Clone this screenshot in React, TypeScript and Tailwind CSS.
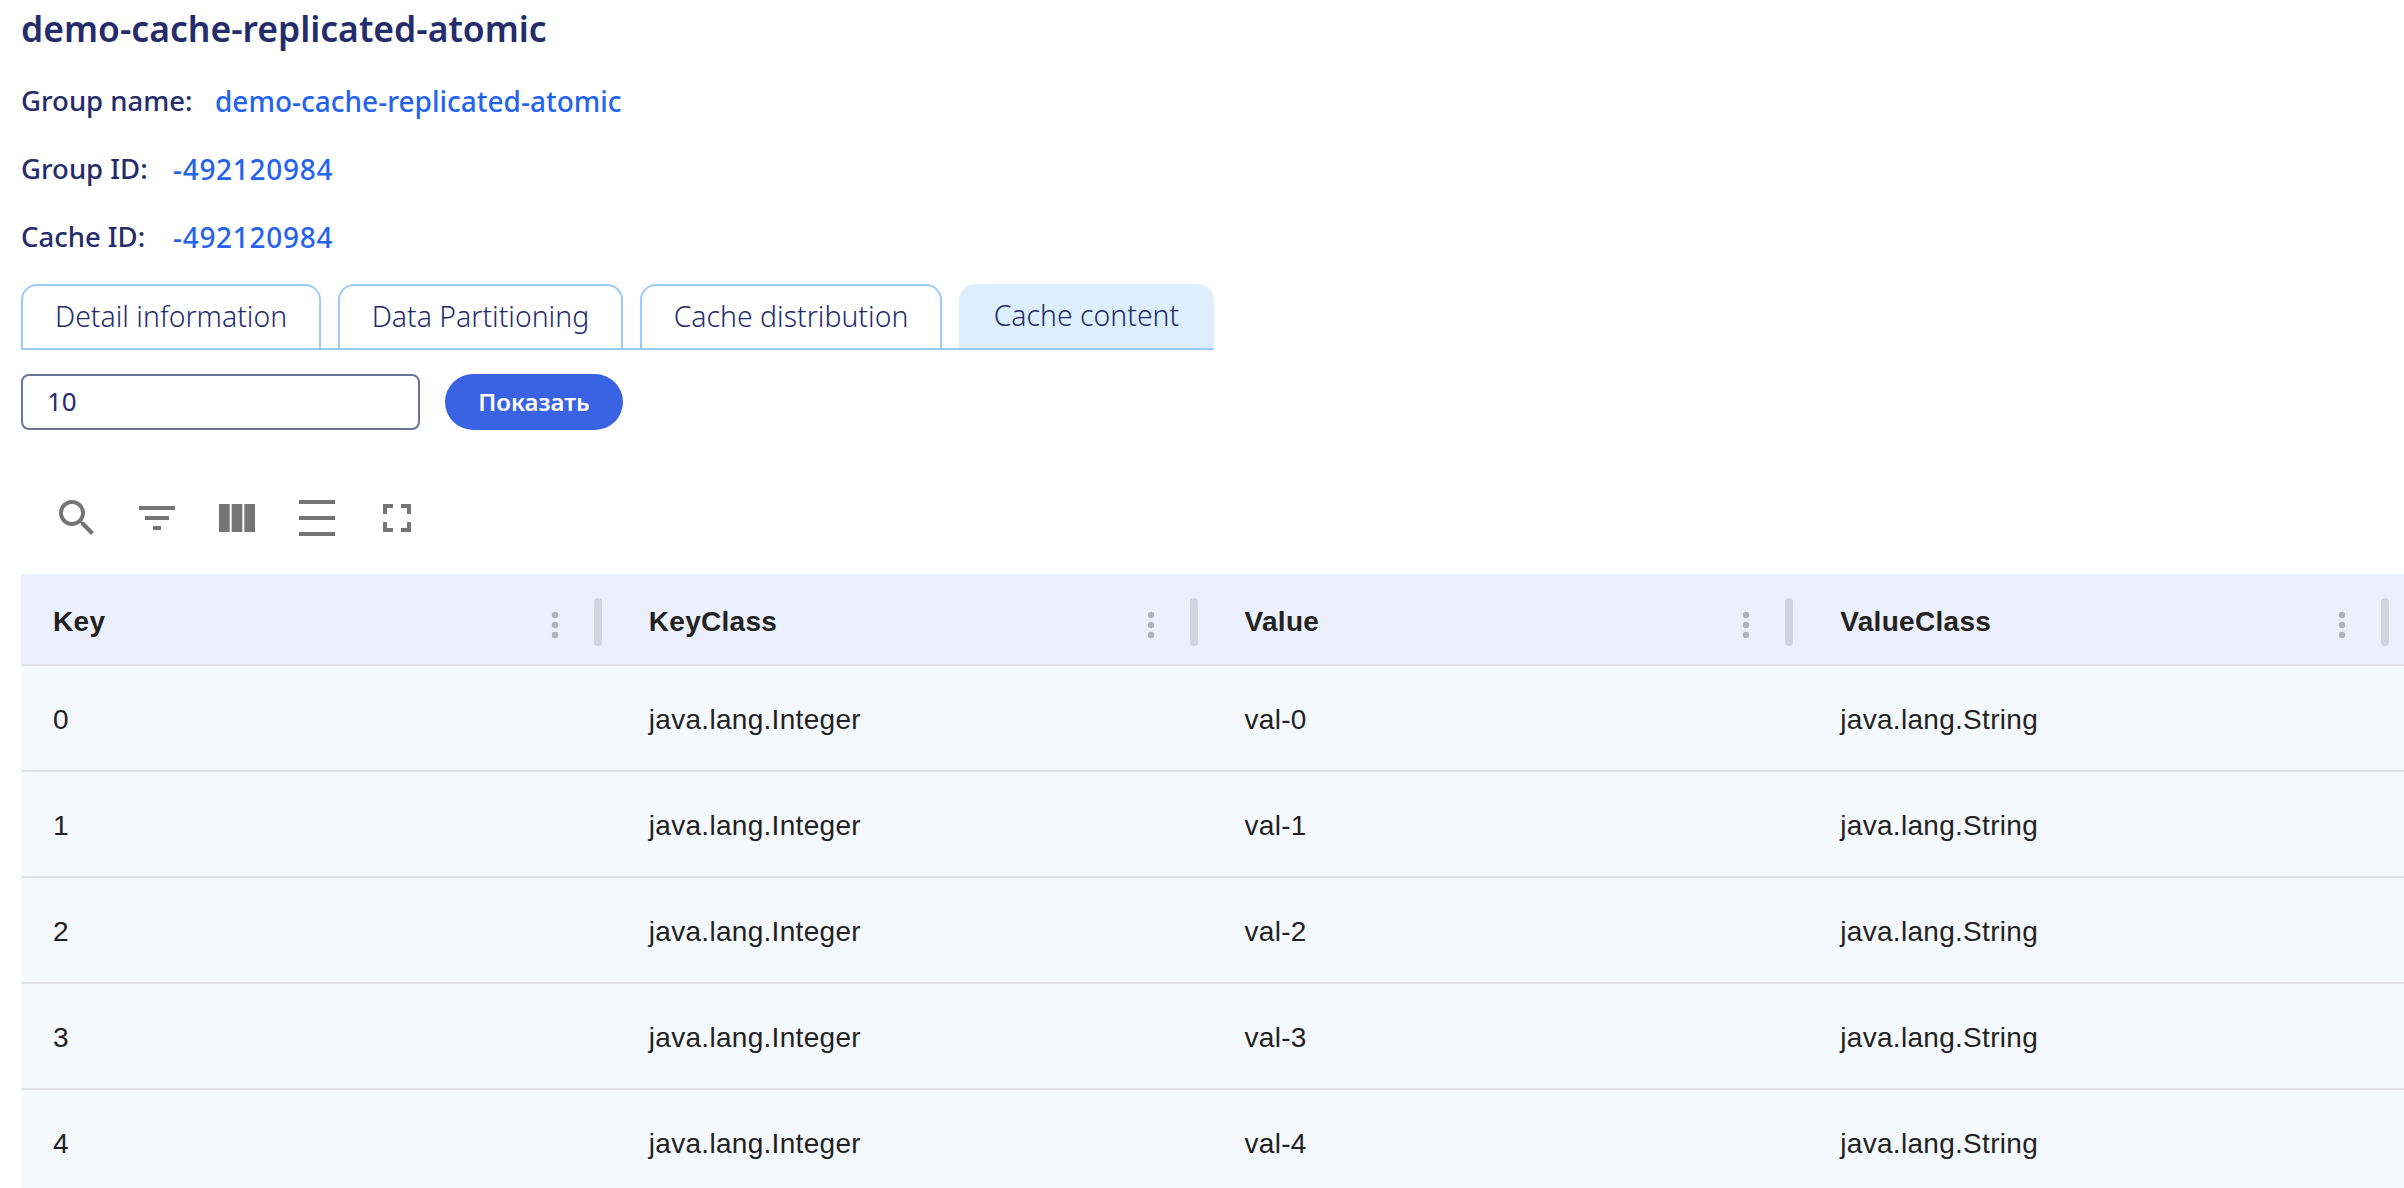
import { ReactNode } from "react";

const FONT = "font-['Noto_Sans',sans-serif]";

const rows = [
  ["0", "java.lang.Integer", "val-0", "java.lang.String"],
  ["1", "java.lang.Integer", "val-1", "java.lang.String"],
  ["2", "java.lang.Integer", "val-2", "java.lang.String"],
  ["3", "java.lang.Integer", "val-3", "java.lang.String"],
  ["4", "java.lang.Integer", "val-4", "java.lang.String"],
];

const columns = ["Key", "KeyClass", "Value", "ValueClass"];
const tabs = ["Detail information", "Data Partitioning", "Cache distribution"];

// material icon paths, 24 unit box
const toolbarIcons = [
  "M15.5 14h-.79l-.28-.27C15.41 12.59 16 11.11 16 9.5 16 5.91 13.09 3 9.5 3S3 5.91 3 9.5 5.91 16 9.5 16c1.61 0 3.09-.59 4.23-1.57l.27.28v.79l5 4.99L20.49 19l-4.99-5zm-6 0C7.01 14 5 11.99 5 9.5S7.01 5 9.5 5 14 7.01 14 9.5 11.99 14 9.5 14z",
  "M10 18h4v-2h-4v2zM3 6v2h18V6H3zm3 7h12v-2H6v2z",
  "M14.67 5v14H9.33V5h5.34zm1 14H21V5h-5.33v14zm-7.33 0V5H3v14h5.33z",
  "M3 3h18v2H3V3zm0 8h18v2H3v-2zm0 8h18v2H3v-2z",
  "M7 14H5v5h5v-2H7v-3zm-2-4h2V7h3V5H5v5zm12 7h-3v2h5v-5h-2v3zM14 5v2h3v3h2V5h-5z",
];

function InfoLine({ label, children, labelWidth, valueClass }: { label: string; children: ReactNode; labelWidth: string; valueClass?: string }) {
  return (
    <div className="flex h-[68px] items-center font-medium">
      <span className={`text-[27.5px] text-[#252c6b] ${labelWidth}`}>{label}</span>
      <span className={`text-[28px] text-[#2563eb] ${valueClass ?? ""}`}>{children}</span>
    </div>
  );
}

function ColumnMenu() {
  return (
    <div className="ml-auto flex items-center">
      <svg width="12" height="32" viewBox="0 0 12 32" className="mt-[6px] fill-[#b0b3bb]">
        <circle cx="6" cy="6" r="3.2" />
        <circle cx="6" cy="16" r="3.2" />
        <circle cx="6" cy="26" r="3.2" />
      </svg>
      <div className="ml-[33px] mr-[15px] h-12 w-2 rounded bg-[#d1d5e0]" />
    </div>
  );
}

export default function App() {
  return (
    <div className={`h-[1188px] w-[2404px] overflow-hidden bg-white ${FONT}`}>
      <div className="pl-[21px]">
        <h1 className="flex h-[58px] items-center text-[35.5px] font-semibold text-[#252c6b]">
          demo-cache-replicated-atomic
        </h1>
        <div className="mt-[9px]">
          <InfoLine label="Group name:" labelWidth="w-[194px]">demo-cache-replicated-atomic</InfoLine>
          <InfoLine label="Group ID:" labelWidth="w-[152px]" valueClass="tracking-[0.7px]">-492120984</InfoLine>
          <InfoLine label="Cache ID:" labelWidth="w-[152px]" valueClass="tracking-[0.7px]">-492120984</InfoLine>
        </div>

        {/* tabs */}
        <div className="mt-[13px] flex w-[1193px] gap-[16.5px] border-b-2 border-[#9ccafa]">
          {tabs.map((t) => (
            <div
              key={t}
              className="flex h-[64px] items-center rounded-t-2xl border-2 border-b-0 border-[#9ccafa] px-8 pb-[2px] text-[28.4px] font-light text-[#252c6b]"
            >
              {t}
            </div>
          ))}
          <div className="flex h-[64px] flex-1 items-center justify-center rounded-t-2xl bg-[#ddeffc] pb-[2px] text-[28.4px] font-light text-[#252c6b]">
            Cache content
          </div>
        </div>

        <div className="mt-6 flex items-center gap-[25px]">
          <input
            readOnly
            value="10"
            className="h-14 w-[399px] rounded-lg border-2 border-[#6a7399] px-[24px] pb-[2px] text-[26px] text-[#252c6b] outline-none"
          />
          <button className="h-14 w-[178px] rounded-[28px] bg-[#3a63e3] text-[24px] font-semibold text-white">
            Показать
          </button>
        </div>

        {/* table toolbar */}
        <div className="flex h-[144px] items-start gap-8 pl-8 pt-[64px]">
          {toolbarIcons.map((d) => (
            <svg key={d} width="48" height="48" viewBox="0 0 24 24" className="fill-[#757575]">
              <path d={d} />
            </svg>
          ))}
        </div>

        {/* table */}
        <div className="font-['Liberation_Sans',sans-serif] text-[28px] tracking-[0.3px] text-[#222222]">
          <div className="grid h-[92px] grid-cols-4 border-b-2 border-[#e0e0e0] bg-[#ecf0fc] font-bold">
            {columns.map((c) => (
              <div key={c} className="flex items-center pl-8 pt-[5px]">
                {c}
                <ColumnMenu />
              </div>
            ))}
          </div>
          {rows.map((r) => (
            <div key={r[0]} className="grid h-[106px] grid-cols-4 border-b-2 border-[#e0e0e0] bg-[#f5f8fd]">
              {r.map((cell, i) => (
                <div key={i} className="flex items-center pl-8 pt-[3px]">
                  {cell}
                </div>
              ))}
            </div>
          ))}
        </div>
      </div>
    </div>
  );
}
